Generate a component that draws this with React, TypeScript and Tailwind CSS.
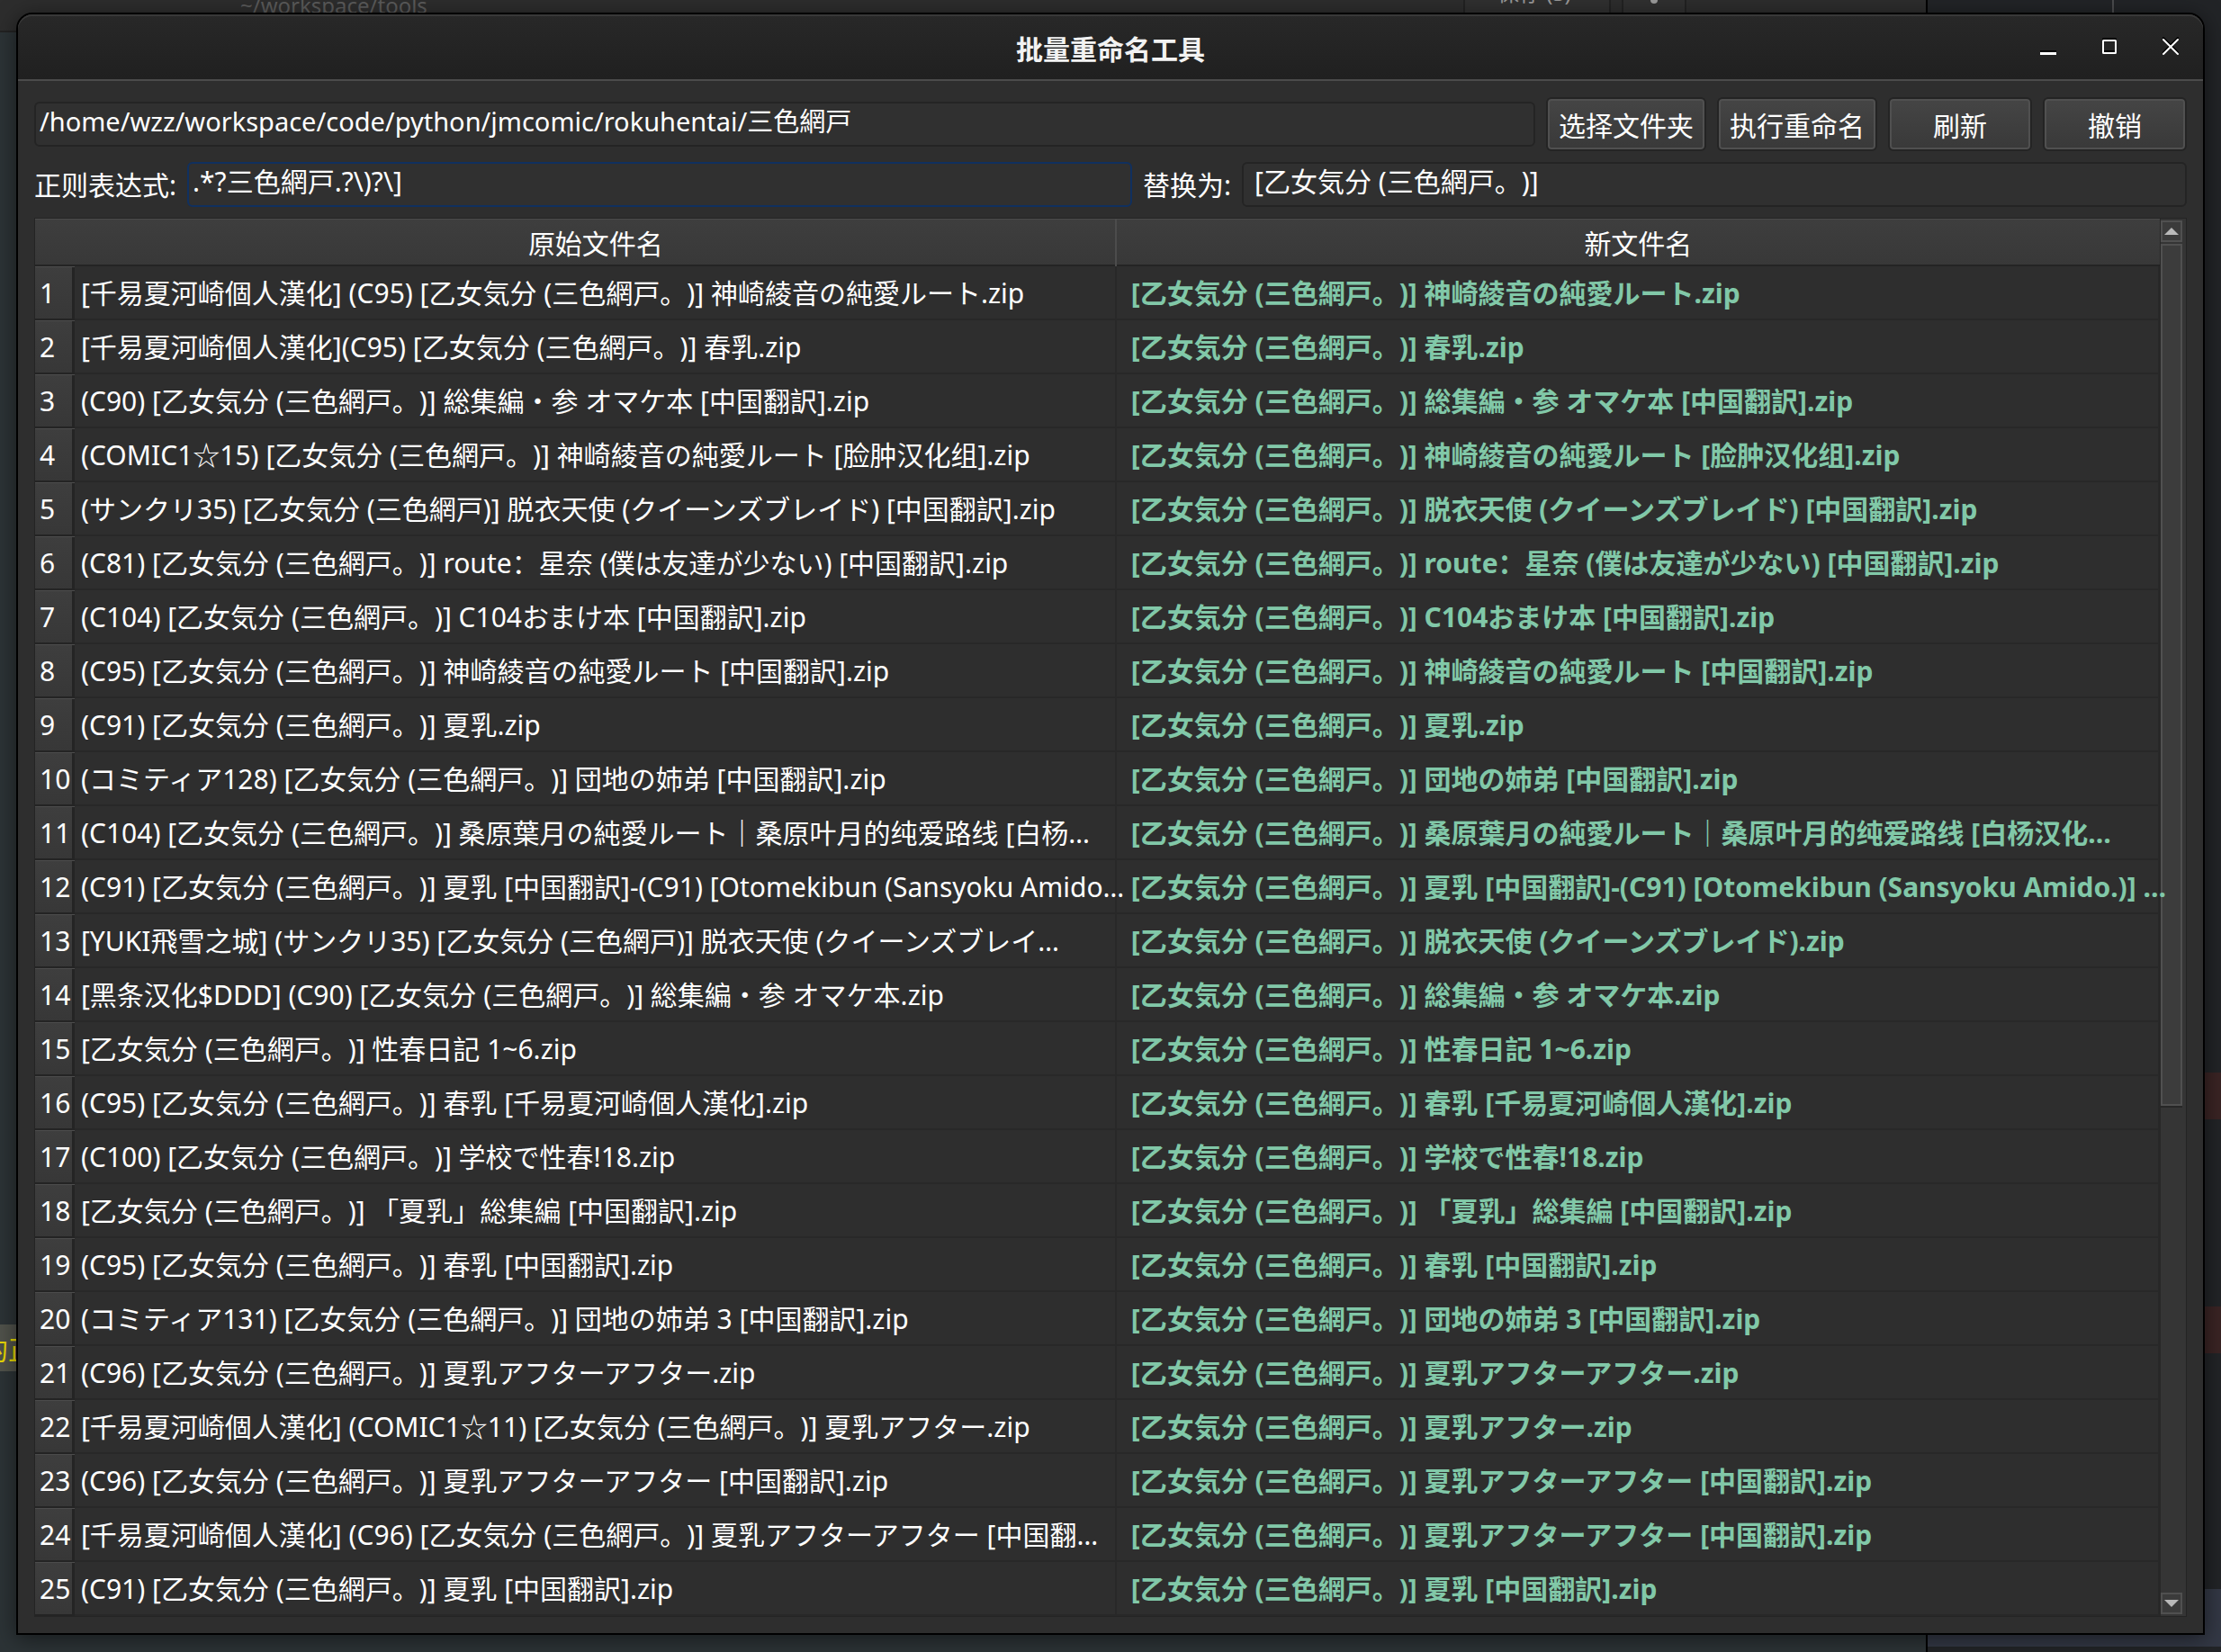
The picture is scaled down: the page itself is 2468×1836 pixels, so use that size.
import React, { useState } from "react";

const CIRCLE = "[乙女気分 (三色網戸。)]";

const files: [string, string][] = [
  [`[千易夏河崎個人漢化] (C95) ${CIRCLE} 神崎綾音の純愛ルート.zip`, "神崎綾音の純愛ルート.zip"],
  [`[千易夏河崎個人漢化](C95) ${CIRCLE} 春乳.zip`, "春乳.zip"],
  [`(C90) ${CIRCLE} 総集編・参 オマケ本 [中国翻訳].zip`, "総集編・参 オマケ本 [中国翻訳].zip"],
  [`(COMIC1☆15) ${CIRCLE} 神崎綾音の純愛ルート [脸肿汉化组].zip`, "神崎綾音の純愛ルート [脸肿汉化组].zip"],
  ["(サンクリ35) [乙女気分 (三色網戸)] 脱衣天使 (クイーンズブレイド) [中国翻訳].zip", "脱衣天使 (クイーンズブレイド) [中国翻訳].zip"],
  [`(C81) ${CIRCLE} route：星奈 (僕は友達が少ない) [中国翻訳].zip`, "route：星奈 (僕は友達が少ない) [中国翻訳].zip"],
  [`(C104) ${CIRCLE} C104おまけ本 [中国翻訳].zip`, "C104おまけ本 [中国翻訳].zip"],
  [`(C95) ${CIRCLE} 神崎綾音の純愛ルート [中国翻訳].zip`, "神崎綾音の純愛ルート [中国翻訳].zip"],
  [`(C91) ${CIRCLE} 夏乳.zip`, "夏乳.zip"],
  [`(コミティア128) ${CIRCLE} 団地の姉弟 [中国翻訳].zip`, "団地の姉弟 [中国翻訳].zip"],
  [`(C104) ${CIRCLE} 桑原葉月の純愛ルート｜桑原叶月的纯爱路线 [白杨…`, "桑原葉月の純愛ルート｜桑原叶月的纯爱路线 [白杨汉化…"],
  [`(C91) ${CIRCLE} 夏乳 [中国翻訳]-(C91) [Otomekibun (Sansyoku Amido…`, "夏乳 [中国翻訳]-(C91) [Otomekibun (Sansyoku Amido.)] …"],
  ["[YUKI飛雪之城] (サンクリ35) [乙女気分 (三色網戸)] 脱衣天使 (クイーンズブレイ…", "脱衣天使 (クイーンズブレイド).zip"],
  [`[黑条汉化$DDD] (C90) ${CIRCLE} 総集編・参 オマケ本.zip`, "総集編・参 オマケ本.zip"],
  [`${CIRCLE} 性春日記 1~6.zip`, "性春日記 1~6.zip"],
  [`(C95) ${CIRCLE} 春乳 [千易夏河崎個人漢化].zip`, "春乳 [千易夏河崎個人漢化].zip"],
  [`(C100) ${CIRCLE} 学校で性春!18.zip`, "学校で性春!18.zip"],
  [`${CIRCLE} 「夏乳」総集編 [中国翻訳].zip`, "「夏乳」総集編 [中国翻訳].zip"],
  [`(C95) ${CIRCLE} 春乳 [中国翻訳].zip`, "春乳 [中国翻訳].zip"],
  [`(コミティア131) ${CIRCLE} 団地の姉弟 3 [中国翻訳].zip`, "団地の姉弟 3 [中国翻訳].zip"],
  [`(C96) ${CIRCLE} 夏乳アフターアフター.zip`, "夏乳アフターアフター.zip"],
  [`[千易夏河崎個人漢化] (COMIC1☆11) ${CIRCLE} 夏乳アフター.zip`, "夏乳アフター.zip"],
  [`(C96) ${CIRCLE} 夏乳アフターアフター [中国翻訳].zip`, "夏乳アフターアフター [中国翻訳].zip"],
  [`[千易夏河崎個人漢化] (C96) ${CIRCLE} 夏乳アフターアフター [中国翻…`, "夏乳アフターアフター [中国翻訳].zip"],
  [`(C91) ${CIRCLE} 夏乳 [中国翻訳].zip`, "夏乳 [中国翻訳].zip"],
];

const fieldClass =
  "h-[50px] min-w-0 flex-1 rounded-md border-2 bg-[#303030] pb-[10px] text-white outline-none";

function ToolButton({ children, wide }: { children: React.ReactNode; wide?: boolean }) {
  return (
    <button
      type="button"
      className={`${wide ? "w-[178px]" : "w-40"} h-[60px] shrink-0 rounded-md border-2 border-[#242424] bg-linear-to-b from-[#454545] to-[#393939] pt-1 text-center shadow-[inset_0_0_0_2px_#505050]`}
    >
      {children}
    </button>
  );
}

function WindowButton({ label, children }: { label: string; children: React.ReactNode }) {
  return (
    <button type="button" aria-label={label} className="size-6">
      <svg
        viewBox="0 0 24 24"
        fill="none"
        stroke="#fff"
        strokeWidth="2"
        className="size-6 drop-shadow-[0_-2px_0_#000]"
      >
        {children}
      </svg>
    </button>
  );
}

function TitleBar() {
  return (
    <header className="grid h-[74px] grid-cols-[1fr_auto_1fr] items-center rounded-t-2xl border-b-2 border-[#4b4b4b] bg-linear-to-b from-[#282828] to-[#202020] shadow-[inset_0_2px_0_#383838]">
      <span />
      <h1 className="pt-[6px] font-bold text-[#f2f2f2]">批量重命名工具</h1>
      <div className="flex justify-end gap-11 pr-6">
        <WindowButton label="最小化">
          <path d="M3 19.5H21" strokeWidth="3" />
        </WindowButton>
        <WindowButton label="最大化">
          <rect x="5" y="5" width="14" height="14" rx="0.5" />
        </WindowButton>
        <WindowButton label="关闭">
          <path d="M4 4L20 20M20 4L4 20" strokeLinecap="round" />
        </WindowButton>
      </div>
    </header>
  );
}

function FileTable() {
  return (
    <table className="w-full table-fixed border-collapse">
      <colgroup>
        <col className="w-[44px]" />
        <col />
        <col className="w-[49.1%]" />
      </colgroup>
      <thead>
        <tr className="h-[53px] bg-linear-to-b from-[#3e3e3e] to-[#383838] shadow-[inset_0_1px_0_#4c4c4c,inset_0_-2px_0_#242424]">
          <td />
          <th scope="col" className="p-0 pt-[2px] text-center font-normal shadow-[inset_-2px_0_0_#4c4c4c]">
            原始文件名
          </th>
          <th scope="col" className="p-0 pt-[2px] text-center font-normal">
            新文件名
          </th>
        </tr>
      </thead>
      <tbody>
        {files.map(([original, renamed], i) => (
          <tr key={i} className="h-[60px]">
            <th
              scope="row"
              className="bg-linear-to-b from-[#3e3e3e] to-[#373737] p-0 pl-[5px] text-left font-normal shadow-[inset_0_1px_0_#4c4c4c,inset_-3px_-2px_0_#242424]"
            >
              {i + 1}
            </th>
            <td className="p-0 pl-[7px] whitespace-nowrap shadow-[inset_-2px_-2px_0_#282828]">
              {original}
            </td>
            <td className="p-0 pl-4 font-bold whitespace-nowrap text-[#81c8a8] shadow-[inset_-2px_-2px_0_#282828]">
              {`${CIRCLE} ${renamed}`}
            </td>
          </tr>
        ))}
      </tbody>
    </table>
  );
}

function ScrollBar() {
  return (
    <div className="flex w-[29px] shrink-0 flex-col gap-[2px] border-l border-[#272727] bg-[#353535] py-[2px] pr-1">
      <button
        type="button"
        aria-label="向上滚动"
        className="flex h-6 items-center justify-center border-2 border-[#505050] bg-[#3b3b3b]"
      >
        <svg viewBox="0 0 16 8" className="h-2 w-4">
          <path d="M0 8L8 0L16 8Z" fill="#b9b9b9" />
        </svg>
      </button>
      <div className="flex min-h-0 flex-1 flex-col">
        <div className="h-[64%] border-2 border-[#505050] bg-[#3c3c3c] shadow-[0_2px_0_#272727]" />
      </div>
      <button
        type="button"
        aria-label="向下滚动"
        className="flex h-6 items-center justify-center border-2 border-[#505050] bg-[#3b3b3b]"
      >
        <svg viewBox="0 0 16 8" className="h-2 w-4">
          <path d="M0 0L8 8L16 0Z" fill="#b9b9b9" />
        </svg>
      </button>
    </div>
  );
}

function Backdrop() {
  return (
    <div className="absolute inset-0 flex text-[24px]" aria-hidden="true">
      <div className="relative flex-1 overflow-hidden bg-[#2c3336]">
        <div className="h-9 border-b-2 border-[#222] bg-[#2d2d2d]" />
        <span className="absolute -top-3 left-[267px] text-[#5b5b5b]">~/workspace/tools</span>
        <span className="absolute -top-[26px] left-[1626px] h-11 w-[164px] border-x-2 border-[#222] bg-[#303030] pl-9 text-[#9a9a9a]">
          保存 (S)
        </span>
        <span className="absolute -top-5 left-[1802px] h-9 w-[72px] border-x-2 border-[#222] bg-[#303030]" />
        <span className="absolute -top-1 left-[1834px] size-2 rounded-full bg-[#9a9a9a]" />
        <span className="absolute top-[1472px] left-0 flex h-[52px] w-10 items-center overflow-hidden bg-[#50524b] pt-1">
          <span className="-ml-[21px] text-[30px] whitespace-nowrap text-[#e8d800]">的正</span>
        </span>
      </div>
      <div className="relative w-[328px] border-l-2 border-black bg-[#222427]">
        <span className="absolute top-0 left-[205px] h-4 w-[2px] bg-[#4a4b4d]" />
        <span className="absolute top-[1192px] right-0 h-[52px] w-10 bg-[#3a2424]" />
        <span className="absolute top-[1452px] right-0 h-[52px] w-10 bg-[#3a2424]" />
        <span className="absolute top-[1766px] right-0 left-0 h-16 bg-[#333845]" />
      </div>
    </div>
  );
}

export default function App() {
  const [path, setPath] = useState("/home/wzz/workspace/code/python/jmcomic/rokuhentai/三色網戸");
  const [pattern, setPattern] = useState(".*?三色網戸.?\\)?\\]");
  const [replacement, setReplacement] = useState(CIRCLE);

  return (
    <div
      lang="zh-CN"
      className="relative min-h-screen overflow-hidden px-[18px] pt-[14px] pb-[18px] font-['Noto_Sans','Noto_Sans_CJK_SC',sans-serif] text-[30px] leading-9 text-white [text-spacing-trim:space-all]"
    >
      <Backdrop />
      <main className="relative rounded-t-[18px] border-2 border-black bg-[#2e2e2e] shadow-[0_4px_24px_rgba(0,0,0,0.5)]">
        <TitleBar />
        <div className="flex flex-col px-[18px] pb-[18px]">
          <div className="flex items-center gap-3 pt-[18px]">
            <input
              aria-label="文件夹路径"
              className={`${fieldClass} border-[#242424] px-1 text-[29px]`}
              value={path}
              onChange={(e) => setPath(e.target.value)}
            />
            <ToolButton wide>选择文件夹</ToolButton>
            <ToolButton wide>执行重命名</ToolButton>
            <ToolButton>刷新</ToolButton>
            <ToolButton>撤销</ToolButton>
          </div>
          <div className="flex items-center gap-3 pt-3">
            <label htmlFor="pattern" className="shrink-0 pt-[2px]">
              正则表达式:
            </label>
            <input
              id="pattern"
              className={`${fieldClass} border-[#10305f] pr-5 pl-1`}
              value={pattern}
              onChange={(e) => setPattern(e.target.value)}
            />
            <label htmlFor="replacement" className="shrink-0 pt-[2px]">
              替换为:
            </label>
            <input
              id="replacement"
              className={`${fieldClass} border-[#242424] px-3`}
              value={replacement}
              onChange={(e) => setReplacement(e.target.value)}
            />
          </div>
          <div className="mt-3 flex border border-[#242424]">
            <div className="relative z-10 min-w-0 flex-1">
              <FileTable />
            </div>
            <ScrollBar />
          </div>
        </div>
      </main>
    </div>
  );
}
